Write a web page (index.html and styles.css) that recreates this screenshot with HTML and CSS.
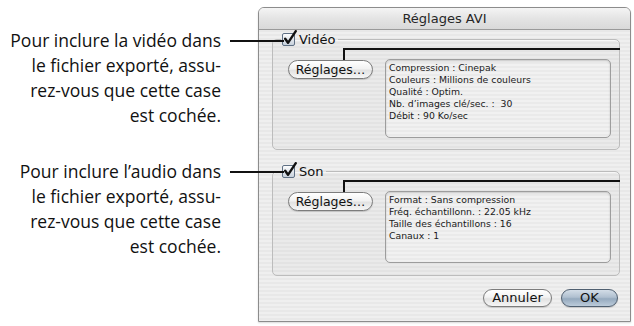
FILE: index.html
```html
<!DOCTYPE html>
<html lang="fr">
<head>
<meta charset="utf-8">
<title>Réglages AVI</title>
<link rel="stylesheet" href="styles.css">
</head>
<body>
<div class="page">
  <div class="callouts">
    <p class="callout callout-video">Pour inclure la vidéo dans<br>le fichier exporté, assu-<br>rez-vous que cette case<br>est cochée.</p>
    <p class="callout callout-audio">Pour inclure l’audio dans<br>le fichier exporté, assu-<br>rez-vous que cette case<br>est cochée.</p>
  </div>
  <div class="window">
    <div class="titlebar">Réglages AVI</div>
    <div class="content">
      <fieldset class="group group-video">
        <legend class="group-label">
          <svg class="check" width="16" height="16" viewBox="0 0 16 16">
            <defs>
              <linearGradient id="cb1" x1="0" y1="0" x2="0" y2="1">
                <stop offset="0" stop-color="#ffffff"/>
                <stop offset="1" stop-color="#c5cfda"/>
              </linearGradient>
            </defs>
            <rect x="0.5" y="3.5" width="12" height="12" rx="1.5" fill="url(#cb1)" stroke="#5f7084"/>
            <path d="M3.2 8.8 L6 12.8 L13.8 1.2" fill="none" stroke="#111" stroke-width="2.4" stroke-linecap="round" stroke-linejoin="round"/>
          </svg><span>Vidéo</span>
        </legend>
        <div class="group-body">
          <span class="leader"></span>
          <button class="btn btn-settings">Réglages…</button>
          <div class="info info-video">Compression : Cinepak<br>Couleurs : Millions de couleurs<br>Qualité : Optim.<br>Nb. d’images clé/sec. :&nbsp; 30<br>Débit : 90 Ko/sec</div>
        </div>
      </fieldset>
      <fieldset class="group group-audio">
        <legend class="group-label">
          <svg class="check" width="16" height="16" viewBox="0 0 16 16">
            <defs>
              <linearGradient id="cb2" x1="0" y1="0" x2="0" y2="1">
                <stop offset="0" stop-color="#ffffff"/>
                <stop offset="1" stop-color="#c5cfda"/>
              </linearGradient>
            </defs>
            <rect x="0.5" y="3.5" width="12" height="12" rx="1.5" fill="url(#cb2)" stroke="#5f7084"/>
            <path d="M3.2 8.8 L6 12.8 L13.8 1.2" fill="none" stroke="#111" stroke-width="2.4" stroke-linecap="round" stroke-linejoin="round"/>
          </svg><span>Son</span>
        </legend>
        <div class="group-body">
          <span class="leader"></span>
          <button class="btn btn-settings">Réglages…</button>
          <div class="info info-audio">Format : Sans compression<br>Fréq. échantillonn. : 22.05 kHz<br>Taille des échantillons : 16<br>Canaux : 1</div>
        </div>
      </fieldset>
      <div class="actions">
        <button class="btn btn-cancel">Annuler</button>
        <button class="btn btn-default">OK</button>
      </div>
    </div>
  </div>
</div>
</body>
</html>
```
FILE: styles.css
```css
* { box-sizing: border-box; }

html, body {
  margin: 0;
  padding: 0;
  background: #ffffff;
}

.page {
  display: flex;
  align-items: flex-start;
  width: 634px;
  height: 326px;
  overflow: hidden;
}

.callouts {
  flex: none;
  width: 221px;
  padding-top: 28px;
  display: flex;
  flex-direction: column;
}

.callout {
  position: relative;
  margin: 0;
  font-family: "Open Sans", "Noto Sans", sans-serif;
  font-size: 17.5px;
  line-height: 25px;
  color: #111;
  text-align: right;
  white-space: nowrap;
}

.callout-audio {
  margin-top: 31px;
}

.callout::after {
  content: "";
  position: absolute;
  left: calc(100% + 9px);
  top: 11.5px;
  width: 54px;
  height: 2px;
  background: #111;
}

.window {
  flex: none;
  margin-left: 37px;
  margin-top: 7px;
  width: 373px;
  height: 315px;
  border: 1px solid #8c8c8c;
  border-radius: 6px 6px 0 0;
  background: repeating-linear-gradient(to bottom, #efefef 0, #efefef 2px, #e8e8e8 2px, #e8e8e8 4px);
  box-shadow: 0 1px 2px rgba(0,0,0,0.15);
  display: flex;
  flex-direction: column;
  font-family: "DejaVu Sans", "Liberation Sans", sans-serif;
}

.titlebar {
  flex: none;
  height: 22px;
  border-bottom: 1px solid #9a9a9a;
  border-radius: 5px 5px 0 0;
  background: linear-gradient(to bottom, #f4f4f4 0%, #e4e4e4 50%, #d9d9d9 100%);
  text-align: center;
  font-size: 13px;
  line-height: 21px;
  color: #262626;
}

.content {
  flex: 1;
  padding: 2px 10px 0 13px;
  display: flex;
  flex-direction: column;
}

.group {
  margin: 0;
  padding: 0;
  min-inline-size: 0;
  border: 1px solid #bcbcbc;
  border-radius: 5px;
  background: rgba(0,0,0,0.018);
  box-shadow: inset 0 1px 0 rgba(255,255,255,0.6);
}

.group-audio {
  margin-top: 14px;
}

.group-label {
  margin-left: 8px;
  padding: 0 3px 0 1px;
  height: 15px;
  display: flex;
  align-items: center;
  font-size: 13px;
  line-height: 15px;
  color: #111;
}

.check {
  display: block;
  margin-top: -3px;
  margin-right: 1px;
}

.group-body {
  position: relative;
  display: flex;
  align-items: flex-start;
  margin-top: 12px;
  padding: 0 8px 11px 15px;
}

.group-audio .group-body {
  padding-bottom: 12px;
}

.leader {
  position: absolute;
  left: 70px;
  top: -11px;
  width: 277px;
  height: 12px;
  border-top: 2px solid #111;
  border-left: 2px solid #111;
}

.btn {
  font-family: "DejaVu Sans", "Liberation Sans", sans-serif;
  font-size: 12.5px;
  color: #111;
  height: 19px;
  padding: 0;
  border: 1px solid #7c7c7c;
  border-radius: 10px;
  background: linear-gradient(to bottom, #ffffff 0%, #f2f2f2 45%, #e2e2e2 55%, #f6f6f6 100%);
  box-shadow: 0 1px 1px rgba(0,0,0,0.15);
  line-height: 17px;
  text-align: center;
}

.btn-settings {
  flex: none;
  width: 85px;
  margin-top: 1px;
}

.info {
  flex: 1;
  margin-left: 12px;
  padding: 2px 3px;
  border: 1px solid #9d9d9d;
  border-radius: 5px;
  background: repeating-linear-gradient(to bottom, #f1f1f1 0, #f1f1f1 2px, #eaeaea 2px, #eaeaea 4px);
  box-shadow: inset 0 1px 2px rgba(0,0,0,0.18);
  font-size: 9.3px;
  line-height: 12px;
  color: #1a1a1a;
  white-space: nowrap;
}

.info-video { height: 79px; }
.info-audio { height: 72px; }

.actions {
  display: flex;
  justify-content: flex-end;
  gap: 9px;
  margin-top: 13px;
  padding-right: 2px;
}

.btn-cancel {
  width: 69px;
  height: 18px;
  font-size: 13px;
  line-height: 16px;
}

.btn-default {
  width: 57px;
  height: 18px;
  font-size: 13px;
  line-height: 16px;
  border-color: #4f5f70;
  background: linear-gradient(to bottom, #d3dde7 0%, #b0c0d0 45%, #95aabe 55%, #bccbda 100%);
}
```
